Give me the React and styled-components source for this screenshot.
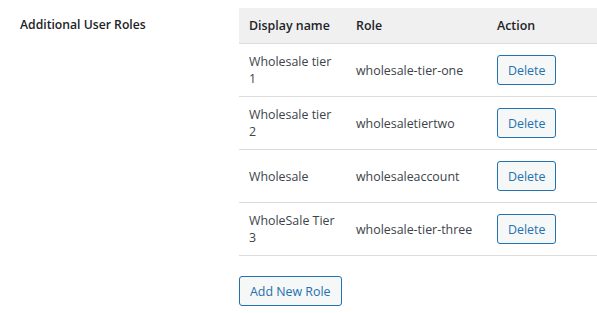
import React from 'react';
import styled, { createGlobalStyle } from 'styled-components';

const GlobalStyle = createGlobalStyle`
  body {
    margin: 0;
    background: #fff;
    font-family: "Open Sans", "Noto Sans", sans-serif;
    font-size: 12.4px;
    color: #3c434a;
  }
`;

const Page = styled.div`
  display: flex;
  align-items: flex-start;
  padding-top: 8px;
`;

const Label = styled.div`
  flex: none;
  width: 239px;
  box-sizing: border-box;
  padding: 7px 0 0 20px;
  font-size: 12.2px;
  font-weight: 600;
  color: #1d2327;
  line-height: 20px;
`;

const Field = styled.div`
  flex: 1;
  display: flex;
  flex-direction: column;
  align-items: flex-start;
`;

const Table = styled.table`
  width: 358px;
  border-collapse: collapse;
  table-layout: fixed;
`;

const HeadCell = styled.th`
  background: #f0f0f1;
  text-align: left;
  font-weight: 600;
  color: #1d2327;
  padding: 8px 10px;
  line-height: 19px;
  width: ${(p) => p.$w}px;
  border-bottom: 1px solid #dcdcde;
`;

const Row = styled.tr`
  border-bottom: 1px solid #dcdcde;
`;

const Cell = styled.td`
  padding: 8px 10px;
  line-height: 17px;
  vertical-align: middle;
  color: #3c434a;
`;

const Button = styled.button`
  font-family: inherit;
  font-size: 12.4px;
  height: 30px;
  margin: ${(p) => p.$margin || '0'};
  padding: 0 10px;
  background: #f6f7f7;
  border: 1px solid #2271b1;
  border-radius: 3px;
  color: #2271b1;
  cursor: pointer;
  display: block;
`;

const roles = [
  { name: 'Wholesale tier 1', role: 'wholesale-tier-one' },
  { name: 'Wholesale tier 2', role: 'wholesaletiertwo' },
  { name: 'Wholesale', role: 'wholesaleaccount' },
  { name: 'WholeSale Tier 3', role: 'wholesale-tier-three' },
];

export default function App() {
  return (
    <>
      <GlobalStyle />
      <Page>
        <Label>Additional User Roles</Label>
        <Field>
          <Table>
            <thead>
              <tr>
                <HeadCell $w={87}>Display name</HeadCell>
                <HeadCell $w={121}>Role</HeadCell>
                <HeadCell $w={90}>Action</HeadCell>
              </tr>
            </thead>
            <tbody>
              {roles.map((r) => (
                <Row key={r.role}>
                  <Cell>{r.name}</Cell>
                  <Cell>{r.role}</Cell>
                  <Cell>
                    <Button $margin="3px 0">Delete</Button>
                  </Cell>
                </Row>
              ))}
            </tbody>
          </Table>
          <Button $margin="20px 0 0">Add New Role</Button>
        </Field>
      </Page>
    </>
  );
}
